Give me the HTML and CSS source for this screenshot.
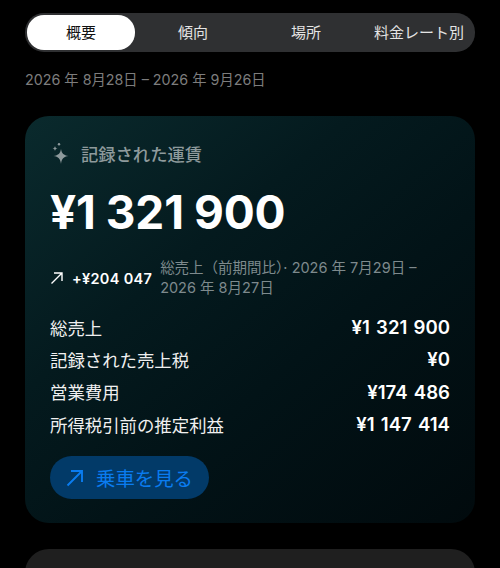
FILE: index.html
```html
<!DOCTYPE html>
<html lang="ja">
<head>
<meta charset="utf-8">
<title>概要</title>
<link rel="stylesheet" href="styles.css">
</head>
<body>
<main class="page">
  <nav class="tabs">
    <div class="tab active">概要</div>
    <div class="tab">傾向</div>
    <div class="tab">場所</div>
    <div class="tab last">料金レート別</div>
  </nav>
  <p class="range">2026 年 8月28日 – 2026 年 9月26日</p>
  <section class="card">
    <header class="card-head">
      <svg class="spark" viewBox="0 0 20 22" width="20" height="22"><path d="M11 7 C11.8 11.5 13.5 13.2 18.5 14 C13.5 14.8 11.8 16.5 11 22 C10.2 16.5 8.5 14.8 3.5 14 C8.5 13.2 10.2 11.5 11 7 Z" fill="#8e9a9c"/><path d="M5 4 C5.3 5.6 5.9 6.2 7.5 6.5 C5.9 6.8 5.3 7.4 5 9 C4.7 7.4 4.1 6.8 2.5 6.5 C4.1 6.2 4.7 5.6 5 4 Z" fill="#8e9a9c"/><circle cx="9" cy="2.2" r="1.2" fill="#8e9a9c"/></svg>
      <span>記録された運賃</span>
    </header>
    <div class="total">¥1 321 900</div>
    <div class="compare">
      <svg class="arrow" viewBox="0 0 14 14" width="14" height="14"><path d="M1.5 12.5 L12 2 M4 2 H12 V10" fill="none" stroke="#fff" stroke-width="1.4"/></svg>
      <strong>+¥204 047</strong>
      <span class="compare-text">総売上（前期間比）· 2026 年 7月29日 – 2026 年 8月27日</span>
    </div>
    <dl class="rows">
      <div class="row"><dt>総売上</dt><dd>¥1 321 900</dd></div>
      <div class="row"><dt>記録された売上税</dt><dd>¥0</dd></div>
      <div class="row"><dt>営業費用</dt><dd>¥174 486</dd></div>
      <div class="row"><dt>所得税引前の推定利益</dt><dd>¥1 147 414</dd></div>
    </dl>
    <div class="action">
      <svg viewBox="0 0 18 18" width="18" height="18"><path d="M1.5 16.5 L16 2 M5 2 H16 V13" fill="none" stroke="#0a7cf0" stroke-width="1.9"/></svg>
      <span>乗車を見る</span>
    </div>
  </section>
  <section class="next-card"></section>
</main>
</body>
</html>
```
FILE: styles.css
```css
* { box-sizing: border-box; }
html, body { margin: 0; background: #000; }
body { font-family: Inter, "Noto Sans CJK JP", sans-serif; color: #fff; }
.page { height: 568px; overflow: hidden; padding: 13px 25px 0; }
.tabs {
  display: grid;
  grid-template-columns: 108px 116px 110px 1fr;
  height: 39px;
  padding: 2px;
  border-radius: 19px;
  background: #2f3032;
}
.tab {
  display: flex;
  align-items: center;
  justify-content: center;
  padding-bottom: 2px;
  font-size: 15px;
  color: #e4e4e4;
}
.tab.active {
  background: #fff;
  color: #111;
  border-radius: 17px;
}
.tab.last { white-space: nowrap; justify-content: flex-end; padding-right: 9px; }
.range {
  margin: 18px 0 0;
  font-size: 14.3px;
  line-height: 20px;
  color: #7d7d7d;
}
.card {
  margin-top: 26px;
  height: 407px;
  padding: 25px 25px 0;
  border-radius: 24px;
  background: linear-gradient(140deg, #0a2a2d 0%, #041a1e 35%, #021317 60%, #010a0d 100%);
}
.card-head { display: flex; align-items: center; gap: 11px; height: 24px; font-size: 17.3px; font-weight: 500; color: #8e9a9c; }
.spark { flex: none; }
.total { margin-top: 21px; font-size: 46px; line-height: 52px; font-weight: 700; letter-spacing: -0.2px; word-spacing: -0.5px; }
.compare { display: flex; align-items: center; margin-top: 19px; height: 42px; font-size: 14.5px; }
.arrow { flex: none; margin-right: 8px; }
.compare strong { flex: none; font-weight: 600; margin-right: 8px; letter-spacing: 0.3px; }
.compare-text { color: #7e8a8d; line-height: 20px; }
.rows { margin: 12px 0 0; }
.row { display: flex; justify-content: space-between; align-items: center; height: 32.3px; font-size: 17.4px; }
.row dt { color: #f0f0f0; }
.row dd { margin: 0; font-weight: 600; font-size: 18.6px; word-spacing: 1.5px; }
.action {
  display: inline-flex;
  align-items: center;
  gap: 12px;
  margin-top: 16px;
  height: 43px;
  padding: 0 16px;
  border-radius: 22px;
  background: #023a68;
  color: #0a7cf0;
  font-size: 19.4px;
}
.next-card { margin-top: 26px; height: 60px; border-radius: 24px; background: #1f1f1f; }
```
